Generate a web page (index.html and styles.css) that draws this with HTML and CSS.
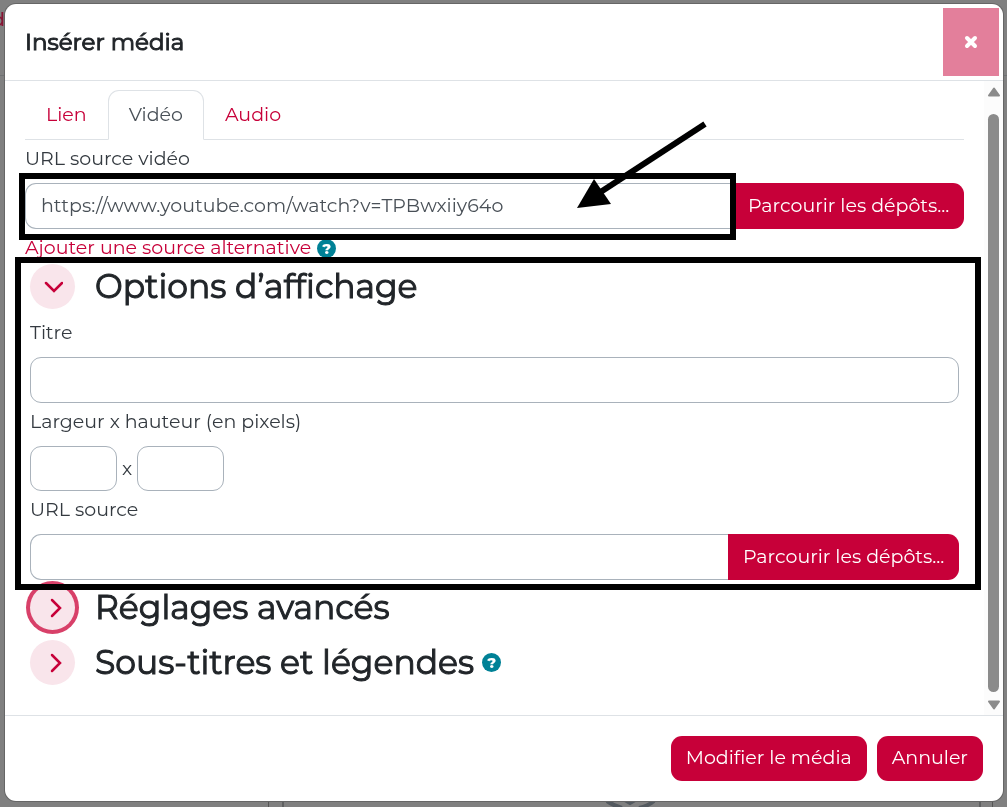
FILE: index.html
```
<!DOCTYPE html>
<html lang="fr">
<head>
<meta charset="utf-8">
<meta name="viewport" content="width=device-width, initial-scale=1">
<title>Insérer média</title>
<link rel="stylesheet" href="styles.css">
</head>
<body>
<div class="backdrop" aria-hidden="true">
  <span class="behind-letter">d</span>
  <span class="behind-rule"></span>
  <svg class="behind-foot" width="724" height="6" viewBox="0 0 724 6">
    <path d="M1.500 0V6M725.500 0V6" stroke="#555" stroke-width="1"/>
    <path d="M16 0V6M713 0V6" stroke="#5f6061" stroke-width="2"/>
    <path d="M340 0Q347 5 355 7M387 0Q381 5 372 7M358 -1L363 2L368 -1" stroke="#53595f" stroke-width="4" fill="none"/>
  </svg>
</div>
<div class="modal" role="dialog" aria-labelledby="modal-title">
  <header class="modal-header">
    <h1 class="modal-title" id="modal-title">Insérer média</h1>
    <button class="close" type="button" aria-label="Fermer">
      <svg width="14" height="14" viewBox="0 0 14 14"><path d="M3 3L11 11M11 3L3 11" stroke="#fff" stroke-width="4" stroke-linecap="round"/></svg>
    </button>
  </header>
  <div class="modal-body">
    <div class="content">
      <nav class="tabs">
        <a class="tab" href="#lien">Lien</a>
        <a class="tab tab-active" href="#video">Vidéo</a>
        <a class="tab" href="#audio">Audio</a>
      </nav>
      <label class="label" for="video-url">URL source vidéo</label>
      <div class="input-group">
        <div class="field">
          <input class="input input-joined" id="video-url" type="text" value="https://www.youtube.com/watch?v=TPBwxiiy64o">
          <span class="frame frame-url"></span>
          <svg class="arrow" width="132" height="90" viewBox="0 0 132 90">
            <path d="M129 4L20 75" stroke="#000" stroke-width="6"/>
            <path d="M1 88L18 59L35 84Z"/>
          </svg>
        </div>
        <button class="btn btn-joined" type="button">Parcourir les dépôts...</button>
      </div>
      <div class="add-source">
        <a class="link" href="#source">Ajouter une source alternative</a>
        <button class="help" type="button" aria-label="Aide">?</button>
      </div>
      <section class="options">
        <div class="section-head">
          <button class="toggle" type="button" aria-label="Replier">
            <svg width="20" height="20" viewBox="0 0 20 20"><path d="M3 6L11 14L19 6" /></svg>
          </button>
          <h2 class="section-title">Options d’affichage</h2>
        </div>
        <label class="label" for="titre">Titre</label>
        <input class="input" id="titre" type="text">
        <label class="label" for="largeur">Largeur x hauteur (en pixels)</label>
        <div class="size-row">
          <input class="input input-size" id="largeur" type="text">
          <span>x</span>
          <input class="input input-size" type="text" aria-label="Hauteur">
        </div>
        <label class="label" for="source-url">URL source</label>
        <div class="input-group">
          <div class="field"><input class="input input-joined" id="source-url" type="text"></div>
          <button class="btn btn-joined" type="button">Parcourir les dépôts...</button>
        </div>
        <span class="frame frame-options"></span>
      </section>
      <div class="section-head">
        <button class="toggle toggle-focus" type="button" aria-label="Déplier">
          <svg width="20" height="20" viewBox="0 0 20 20"><path d="M9 2L17 10L9 18"/></svg>
        </button>
        <h2 class="section-title">Réglages avancés</h2>
      </div>
      <div class="section-head">
        <button class="toggle" type="button" aria-label="Déplier">
          <svg width="20" height="20" viewBox="0 0 20 20"><path d="M9 2L17 10L9 18"/></svg>
        </button>
        <h2 class="section-title">Sous-titres et légendes</h2>
        <button class="help" type="button" aria-label="Aide">?</button>
      </div>
    </div>
    <div class="scrollbar" aria-hidden="true">
      <svg width="14" height="10" viewBox="0 0 14 10"><path d="M7 1.500L12 8.500H2Z"/></svg>
      <span class="thumb"></span>
      <svg width="14" height="10" viewBox="0 0 14 10"><path d="M7 8.500L12 1.500H2Z"/></svg>
    </div>
  </div>
  <footer class="modal-footer">
    <button class="btn" type="button">Modifier le média</button>
    <button class="btn" type="button">Annuler</button>
  </footer>
</div>
</body>
</html>
```

FILE: styles.css
```
* { box-sizing: border-box; }
body {
  margin: 0;
  min-height: 100vh;
  display: flex;
  padding: 4px 4px 6px 5px;
  background: #808080;
  font-family: Montserrat, Inter, "Open Sans", sans-serif;
  font-size: 19px;
  line-height: 28px;
  color: #343a40;
}
button, input { font: inherit; }
button { cursor: pointer; }

.backdrop { position: fixed; inset: 0; overflow: hidden; }
.behind-letter { position: absolute; left: -8px; top: 6px; color: #861433; font-weight: 500; }
.behind-rule { position: absolute; left: 0; right: 0; top: 75px; height: 1px; background: #6f7173; }
.behind-foot { position: absolute; left: 267px; bottom: 0; overflow: visible; }

.modal {
  position: relative;
  flex: 1;
  min-width: 0;
  display: flex;
  flex-direction: column;
  background: #fff;
  border-radius: 11px;
  box-shadow: 0 0 0 1px #666;
}
.modal-header {
  display: flex;
  justify-content: space-between;
  align-items: center;
  padding: 4px 4px 4px 20px;
  border-bottom: 1px solid #dee2e6;
}
.modal-title,
.section-title { font-weight: 400; color: #212529; -webkit-text-stroke: 1px #212529; }
.modal-title { margin: 0; font-size: 23px; }
.close {
  display: grid;
  place-items: center;
  width: 56px;
  height: 68px;
  padding: 0;
  border: 0;
  background: #e37f9b;
}

.modal-body { flex: 1; display: flex; min-height: 0; }
.content { flex: 1; min-width: 0; padding: 9px 20px 20px; }
.tabs { display: flex; border-bottom: 1px solid #dee2e6; margin-bottom: 4px; }
.tab {
  padding: 10px 20px;
  margin-bottom: -1px;
  border: 1px solid transparent;
  border-radius: 11px 11px 0 0;
  color: #c70039;
  text-decoration: none;
}
.tab-active { border-color: #dee2e6 #dee2e6 #fff; background: #fff; color: #495057; }

.label { display: block; width: fit-content; margin: 5px 0 10px; }
.input {
  display: block;
  width: 100%;
  height: 46px;
  padding: 0 15px 2px;
  border: 1px solid #a9b2bb;
  border-radius: 11px;
  background: #fff;
  color: #495057;
}
.input-joined { border-right: 0; border-radius: 11px 0 0 11px; }
.input-group { display: flex; }
.field { position: relative; flex: 1; min-width: 0; }
.btn {
  height: 45px;
  padding: 0 15px 2px;
  border: 0;
  border-radius: 11px;
  background: #c70039;
  color: #fff;
  white-space: nowrap;
}
.btn-joined { width: 231px; height: 46px; padding-bottom: 0; border-radius: 0 11px 11px 0; }

.add-source { display: flex; align-items: center; gap: 6px; margin: 5px 0 2px; }
.link { color: #c70039; text-decoration: none; }
.help {
  display: grid;
  place-items: center;
  width: 19px;
  height: 19px;
  padding: 0;
  border: 0;
  border-radius: 50%;
  background: #008196;
  color: #fff;
  font-size: 15px;
  line-height: 19px;
  font-weight: 800;
}

.options { position: relative; margin: 0 5px 5px; }
.section-head { display: flex; align-items: center; gap: 8px; margin: 0 5px 10px; }
.options .section-head { margin: 0 0 10px; }
.section-title { margin: 0 0 0 12px; font-size: 33px; line-height: 45px; }
.toggle {
  display: grid;
  place-items: center;
  width: 45px;
  height: 45px;
  padding: 0;
  border: 0;
  border-radius: 50%;
  background: #f9e5eb;
}
.toggle path { fill: none; stroke: #c70039; stroke-width: 2.5; stroke-linecap: round; }
.toggle-focus { box-shadow: 0 0 0 4px #d84069; }
.size-row { display: flex; align-items: center; gap: 5px; }
.input-size { width: 87px; height: 45px; }

.frame { position: absolute; border: 6px solid #000; pointer-events: none; z-index: 1; }
.frame-url { inset: -10px -3px -11px -6px; }
.frame-options { inset: -7px -22px -10px -15px; }
.arrow { position: absolute; right: 25px; bottom: 19px; z-index: 2; pointer-events: none; }

.scrollbar {
  width: 19px;
  display: flex;
  flex-direction: column;
  align-items: center;
  gap: 17px;
  padding: 6px 0 5px;
  background: #fcfcfc;
}
.scrollbar svg { flex: none; }
.scrollbar path { fill: #8b8b8b; stroke: #8b8b8b; stroke-width: 2; stroke-linejoin: round; }
.thumb { flex: 1; width: 11px; border-radius: 6px; background: #8b8b8b; }
.thumb + svg { margin-top: -9px; }

.modal-footer {
  display: flex;
  justify-content: flex-end;
  gap: 10px;
  padding: 20px;
  border-top: 1px solid #dee2e6;
}
```
